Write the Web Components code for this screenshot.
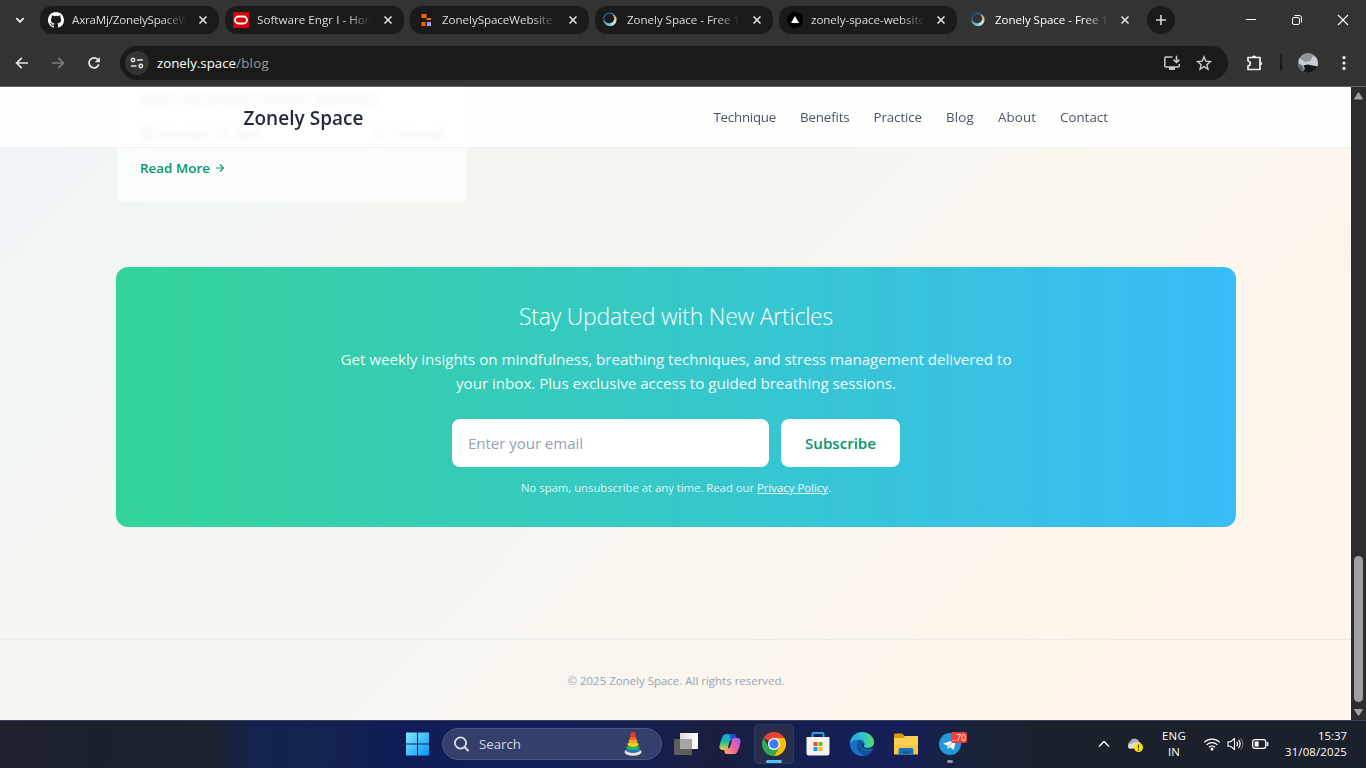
<!DOCTYPE html>
<html lang="en">
<head>
<meta charset="utf-8">
<title>Zonely Space - Free 1</title>
<style>
html,body{margin:0;height:100%;overflow:hidden}
body{font-family:"Open Sans","Noto Sans",sans-serif;background:#333}
</style>
</head>
<body>
<desktop-screen></desktop-screen>
<script>
function define(name, html, setup) {
  const t = document.createElement('template');
  t.innerHTML = html;
  customElements.define(name, class extends HTMLElement {
    connectedCallback() {
      if (this.shadowRoot) return;
      this.attachShadow({mode: 'open'}).append(t.content.cloneNode(true));
      if (setup) setup(this, this.shadowRoot);
    }
  });
}

/* Chrome tab */
define('browser-tab', `
<style>
:host{display:flex;box-sizing:border-box;width:var(--tw,179px);height:28px;border-radius:12px;background:#1a1a1a;align-items:center;padding:0 9px 0 8px;color:#dcdcdc;font-size:11.6px}
:host([active]){background:none;color:#fff}
.ico{width:16px;height:16px;display:flex;flex:none;margin-right:8px}
.t{flex:1;overflow:hidden;white-space:nowrap;height:18px;line-height:18px;-webkit-mask:linear-gradient(90deg,#000 78%,transparent 100%);mask:linear-gradient(90deg,#000 78%,transparent 100%)}
.x{flex:none;margin-left:9px;width:14px;height:14px}
</style>
<span class="ico"><slot name="icon"></slot></span><div class="t"><slot></slot></div>
<svg class="x" viewBox="0 0 14 14"><path d="M3.500 3.500l7 7M10.500 3.500l-7 7" stroke="#e3e3e3" stroke-width="1.600"/></svg>`);

define('moon-icon', `
<style>:host{display:block;width:16px;height:16px}</style>
<svg width="16" height="16" viewBox="0 0 16 16"><defs><linearGradient id="g" x1=".1" y1=".9" x2=".9" y2=".1"><stop offset="0" stop-color="#3ba3d6"/><stop offset=".35" stop-color="#a9e0f0"/><stop offset=".62" stop-color="#f6dcc0"/><stop offset=".85" stop-color="#d9b28c"/><stop offset="1" stop-color="#29506b"/></linearGradient></defs>
<circle cx="7" cy="7.500" r="6.200" fill="none" stroke="#235f82" stroke-width="1"/>
<path fill-rule="evenodd" d="M.4 7.500a6.600 6.600 0 1 0 13.200 0a6.600 6.600 0 1 0-13.200 0zM1 6.500a5.100 5.100 0 1 1 10.200 0a5.100 5.100 0 1 1-10.200 0z" fill="url(#g)"/><path d="M1 9.500A6.300 6.300 0 0 1 11 2.500" fill="none" stroke="#1f5170" stroke-width="1.300"/></svg>`);

define('tab-strip', `
<style>
:host{display:flex;height:40px;align-items:center;padding-left:12px;box-sizing:border-box}
.chev{width:16px;height:16px;margin-right:12px;flex:none}
.tabs{display:flex;gap:6px}
.plus{width:28px;height:28px;border-radius:50%;background:#1a1a1a;margin-left:6px;display:flex}
.win{margin-left:auto;display:flex}
.win svg{width:46px;height:40px}
browser-tab.n{--tw:178px}
svg{display:block}
</style>
<svg class="chev" viewBox="0 0 16 16"><path d="M4.300 6.200L8 9.900l3.700-3.700" fill="none" stroke="#e8e8e8" stroke-width="1.900"/></svg>
<div class="tabs">
<browser-tab style="--tw:179px"><svg slot="icon" viewBox="0 0 16 16" width="16" height="16"><path fill="#fff" d="M8 0C3.580 0 0 3.580 0 8c0 3.540 2.290 6.530 5.470 7.590.4.070.55-.17.55-.38v-1.490c-2.010.37-2.530-.49-2.690-.94-.09-.23-.48-.94-.82-1.130-.28-.15-.68-.52-.01-.53.63-.01 1.080.58 1.230.82.72 1.210 1.870.87 2.330.66.07-.52.28-.87.51-1.070-1.780-.2-3.640-.89-3.640-3.950 0-.87.31-1.590.82-2.150-.08-.2-.36-1.020.08-2.120 0 0 .67-.21 2.200.82a7.600 7.600 0 0 1 4 0c1.530-1.040 2.200-.82 2.200-.82.44 1.100.16 1.920.08 2.120.51.56.82 1.270.82 2.150 0 3.070-1.870 3.750-3.650 3.950.29.25.54.73.54 1.480v2.200c0 .21.15.46.55.38A8 8 0 0 0 16 8c0-4.420-3.580-8-8-8z"/></svg><fit-text w="117">AxraMj/ZonelySpaceW</fit-text></browser-tab>
<browser-tab><svg slot="icon" viewBox="0 0 16 16" width="16" height="16"><path fill="#d9000d" d="M0 0h16v16H0z"/><rect x="2" y="4.500" width="12" height="7" rx="3.500" fill="none" stroke="#fff" stroke-width="1.800"/></svg><fit-text w="115">Software Engr I - Hon</fit-text></browser-tab>
<browser-tab><svg slot="icon" viewBox="0 0 16 16" width="16" height="16"><path fill="#fa6400" d="M3.500 2h5v4h4.500v2H8.500V6h-5zM3.500 10h4v4h-4z"/><path fill="#a797ff" d="M9 10h4v4H9z"/></svg><fit-text w="117">ZonelySpaceWebsite -</fit-text></browser-tab>
<browser-tab class="n"><moon-icon slot="icon"></moon-icon><fit-text w="113">Zonely Space - Free 1</fit-text></browser-tab>
<browser-tab class="n"><svg slot="icon" viewBox="0 0 16 16" width="16" height="16"><circle cx="8" cy="8" r="8"/><path fill="#fff" d="M8 4l4 7H4z"/></svg><fit-text w="114">zonely-space-website</fit-text></browser-tab>
<browser-tab class="n" active><moon-icon slot="icon"></moon-icon><fit-text w="113">Zonely Space - Free 1</fit-text></browser-tab>
</div>
<div class="plus"><svg width="28" height="28"><path d="M14 9v10M9 14h10" stroke="#d5d5d5" stroke-width="1.600"/></svg></div>
<div class="win">
<svg><path d="M18 19.500h10" stroke="#fff"/></svg>
<svg><g fill="none" stroke="#fff"><rect x="18.500" y="17.500" width="7" height="7" rx="1.500"/><path d="M20.500 15.500h5a2 2 0 0 1 2 2v5"/></g></svg>
<svg><path d="M18 15l10 10M28 15l-10 10" stroke="#fff" stroke-width="1.100"/></svg>
</div>`);

define('tool-bar', `
<style>
:host{display:flex;height:46px;align-items:center;box-sizing:border-box;padding:0 12px 0 12px}
svg{display:block;flex:none}
.nav{display:flex;gap:16px;margin:0 16px 0 0}
.omni{display:flex;align-items:center;width:1108px;height:34px;border-radius:17px;background:#1a1a1a;box-sizing:border-box;padding:0 14px 0 5px;flex:none}
.site{width:24px;height:24px;border-radius:50%;background:#333;margin-right:8px}
.url{color:#fff;font-size:13.300px;display:flex}
.url .p{color:#9a9a9a}
.r{margin-left:auto;display:flex;gap:12px}
.ext{margin-left:16px}
.sep{width:2px;height:16px;background:#1a1a1a;margin:0 16px 0 16px}
.av{margin-right:16px}
</style>
<div class="nav">
<svg width="20" height="20"><path d="M16 10H5M9.800 4.800L4.600 10l5.200 5.200" fill="none" stroke="#e6e6e6" stroke-width="1.700"/></svg>
<svg width="20" height="20"><path d="M4 10h11M10.200 4.800l5.200 5.200-5.200 5.200" fill="none" stroke="#7d7d7d" stroke-width="1.700"/></svg>
<svg width="20" height="20"><path d="M14.800 11.300A5 5 0 1 1 13.600 6.400L15 7.800" fill="none" stroke="#e6e6e6" stroke-width="1.700"/><path d="M15.900 4v5.200h-5.200z" fill="#e6e6e6"/></svg>
</div>
<div class="omni">
<svg class="site" viewBox="0 0 24 24"><g fill="none" stroke="#e6e6e6" stroke-width="1.500"><circle cx="8" cy="9" r="1.700"/><path d="M12 9h5.800M6 15h5.500"/><circle cx="15.800" cy="15" r="1.700"/></g></svg>
<div class="url"><fit-text w="79">zonely.space</fit-text><fit-text w="33" class="p">/blog</fit-text></div>
<div class="r">
<svg width="20" height="20"><path d="M10.500 4H3.800Q2.800 4 2.800 5v8q0 1 1 1h12.400q1 0 1-1v-2" fill="none" stroke="#c7c7c7" stroke-width="1.500"/><path d="M7 14h6v3H7z" fill="#c7c7c7"/><path d="M14.500 2.800v6.500M11.600 6.600l2.900 2.900 2.900-2.900" fill="none" stroke="#c7c7c7" stroke-width="1.500"/></svg>
<svg width="20" height="20"><path d="M10 3.800l1.800 4.300 4.700.4-3.600 3.100 1.100 4.600-4-2.500-4 2.500 1.100-4.600-3.600-3.100 4.700-.4z" fill="none" stroke="#c7c7c7" stroke-width="1.400"/></svg>
</div></div>
<svg class="ext" width="20" height="20"><path d="M4 4.500h12v12H4v-3.500q2.300-.5 2.300-2.500T4 8z" fill="none" stroke="#f0f0f0" stroke-width="1.700" stroke-linejoin="round"/><path d="M7.900 4.500a2.100 2.100 0 0 1 4.200 0zM16 8.400a2.100 2.100 0 0 1 0 4.200z" fill="#f0f0f0"/></svg>
<div class="sep"></div>
<svg class="av" width="20" height="20"><defs><clipPath id="c"><circle cx="10" cy="10" r="10"/></clipPath></defs><g clip-path="url(#c)"><path fill="#8d959d" d="M0 0h20v20H0z"/><path fill="#c9ccd0" d="M1 5l6 4 5-1 3-5 5 2v8l-8 2H0z"/><path fill="#666b70" d="M0 10l5 3 1 7H0z"/><path fill="#15181b" d="M5.500 12.500l4-1 10 2-1 2.500-3 4H4l3-4z"/></g></svg>
<svg width="20" height="20"><g fill="#f0f0f0"><circle cx="10" cy="4.600" r="1.600"/><circle cx="10" cy="10" r="1.600"/><circle cx="10" cy="15.400" r="1.600"/></g></svg>`);

/* Web page */
define('site-header', `
<style>
:host{display:flex;position:absolute;inset:0 0 auto 0;height:61px;box-sizing:border-box;border-bottom:1px solid #eff2f1;background:rgba(255,255,255,.87);backdrop-filter:blur(3px);padding:0 243px 0 243.500px;align-items:center;justify-content:space-between}
.logo{font-size:19px;line-height:22px;font-weight:600;color:#1e293b;margin-top:2px}
nav{display:flex;gap:24px;font-size:13.300px;color:#475569}
</style>
<fit-text w="120" class="logo">Zonely Space</fit-text>
<nav><fit-text w="62.500">Technique</fit-text><fit-text w="49.500">Benefits</fit-text><fit-text w="48.500">Practice</fit-text><fit-text w="28">Blog</fit-text><fit-text w="38">About</fit-text><fit-text w="48">Contact</fit-text></nav>`);

define('article-card', `
<style>
:host{display:block;box-sizing:border-box;width:350px;height:115px;margin-left:117px;padding:0 23px;background:rgba(255,255,255,.7);border-radius:0 0 8px 8px;font-size:13.300px;color:#475569;overflow:hidden}
.l{height:24px;line-height:22px}
.m{display:flex;justify-content:space-between;height:20px;line-height:20px;margin-top:13px;font-size:11.500px}
.m span{display:flex;align-items:center;gap:4px}
.more{display:flex;align-items:center;gap:5px;height:20px;line-height:20px;margin-top:14px;color:#059669;font-weight:600}
</style>
<div class="l"><fit-text w="241">peace and present moment awareness.</fit-text></div>
<div class="m"><span><svg width="14" height="14"><path d="M2 3h10v9H2zM2 6h10" fill="none" stroke="#475569"/></svg><fit-text w="102">December 10, 2024</fit-text></span><span><svg width="14" height="14"><circle cx="7" cy="7" r="5.500" fill="none" stroke="#475569"/><path d="M7 4v3.500h2" fill="none" stroke="#475569"/></svg><fit-text w="55">7 min read</fit-text></span></div>
<div class="more"><fit-text w="70">Read More</fit-text><svg width="11" height="12"><path d="M1 6h7M5 2.500L8.500 6 5 9.500" fill="none" stroke="#10a070" stroke-width="1.100"/></svg></div>`);

define('newsletter-signup', `
<style>
:host{display:flex;flex-direction:column;align-items:center;box-sizing:border-box;width:1120px;height:260px;margin:65px 0 0 116px;border-radius:12px;background:linear-gradient(90deg,#34d399,#38bdf8);padding-top:32px;color:#fff}
.h{font-size:23px;font-weight:300;line-height:32px;height:32px;margin-top:1px}
.p{font-size:15.200px;line-height:24px;text-align:center;margin-top:15px;color:rgba(255,255,255,.94);display:flex;flex-direction:column;align-items:center}
form{display:flex;gap:12px;margin-top:24px}
.in,.b{height:48px;line-height:48px;border-radius:8px;background:#fff;font-size:15.200px;box-sizing:border-box}
.in{width:317px;padding-left:16px;color:#94a3b8}
.b{width:119px;padding-left:24px;color:#059669;font-weight:600}
.s{display:flex;font-size:11.400px;line-height:16px;margin-top:13px;color:rgba(255,255,255,.85)}
.u{text-decoration:underline;color:#f0fbff}
</style>
<fit-text w="314" class="h">Stay Updated with New Articles</fit-text>
<div class="p"><fit-text w="671">Get weekly insights on mindfulness, breathing techniques, and stress management delivered to</fit-text><fit-text w="440">your inbox. Plus exclusive access to guided breathing sessions.</fit-text></div>
<form><div class="in"><fit-text w="115">Enter your email</fit-text></div><div class="b"><fit-text w="71">Subscribe</fit-text></div></form>
<div class="s"><fit-text w="236">No spam, unsubscribe at any time. Read our&nbsp;</fit-text><fit-text w="71" class="u">Privacy Policy</fit-text><span>.</span></div>`);

define('site-footer', `
<style>:host{display:flex;justify-content:center;box-sizing:border-box;height:81px;margin-top:112px;border-top:1px solid rgba(226,232,240,.6);padding:33px 0 0 1px;font-size:11.400px;line-height:16px;color:#94a3b8}</style>
<fit-text w="217">© 2025 Zonely Space. All rights reserved.</fit-text>`);

define('scroll-bar', `
<style>:host{display:flex;flex-direction:column;align-items:center;width:15px;background:#2c2c2c;flex:none}
.th{width:9px;height:146px;border-radius:5px;background:#9f9f9f;margin-top:auto}svg{display:block;flex:none}</style>
<svg width="15" height="18"><path d="M7.500 5.500l4 6.500h-8z" fill="#9f9f9f" stroke="#9f9f9f" stroke-linejoin="round"/></svg><div class="th"></div><svg width="15" height="18"><path d="M3.500 7.500h8l-4 6z" fill="#9f9f9f" stroke="#9f9f9f" stroke-linejoin="round"/></svg>`);

define('web-page', `
<style>
:host{display:flex;height:634px;box-sizing:border-box;border-top:1px solid #666}
main{position:relative;width:1351px;overflow:hidden;background:linear-gradient(135deg,#eef4f8 0%,#f4f6f1 28%,#f7f6f0 50%,#fbf6ee 66%,#fff5eb 84%)}
</style>
<main><article-card></article-card><newsletter-signup></newsletter-signup><site-footer></site-footer><site-header></site-header></main>
<scroll-bar></scroll-bar>`);

/* Windows taskbar */
define('task-bar', `
<style>
:host{display:flex;height:48px;box-sizing:border-box;border-top:1px solid #3b415c;background:linear-gradient(90deg,#1c212b 0,#1b222d 205px,#13234d 255px,#14224f 330px,#101c57 400px,#132057 560px,#16204f 650px,#1a1e3e 715px,#14204f 790px,#131f57 900px,#1a2236 985px,#1b212b 1040px,#1b212c 100%);align-items:center;padding:0 19px 2px 405px;color:#fff}
svg{display:block;flex:none}
.search{display:flex;align-items:center;box-sizing:border-box;width:220px;height:32px;border-radius:16px;background:#343f6c;border:1px solid #4d5780;margin:0 2px 0 12px;padding:0 16px 0 10px;font-size:13.300px;color:#d2d6e3;flex:none}
.search fit-text{margin-left:9px}
.search svg:last-child{margin-left:auto}
.app{width:40px;height:40px;margin:0 2px;display:flex;flex-direction:column;align-items:center;justify-content:center;border-radius:5px;box-sizing:border-box;position:relative;flex:none}
.app.on{background:#282d4b;border:1px solid #343955}
.bar{position:absolute;bottom:0;width:16px;height:3px;border-radius:2px;background:#4cc2ff}
.bar.s{width:6px;bottom:1px;background:#9397a5}
.badge{position:absolute;left:21px;top:8px;width:16px;height:11px;border-radius:2px;background:#f33c35;font-size:8.500px;line-height:11px;text-align:center}
.tray{margin-left:auto;display:flex;align-items:center;font-size:11.400px;line-height:16px}
.tray>div{display:flex;flex-direction:column;align-items:center}
.tray .clk{align-items:flex-end}
</style>
<svg width="25" height="24"><defs><linearGradient id="w" x1="0" y1="0" x2="1" y2="1" ><stop offset="0" stop-color="#7deaff"/><stop offset="1" stop-color="#0a94f6"/></linearGradient></defs><path fill="url(#w)" d="M1 .5h11v11H1zM13 .5h11v11H13zM1 12.500h11v11H1zM13 12.500h11v11H13z"/></svg>
<div class="search"><svg width="17" height="18"><circle cx="7.500" cy="8" r="5.600" fill="none" stroke="#dfe3ee" stroke-width="1.700"/><path d="M11.500 12l4 4" stroke="#dfe3ee" stroke-width="1.900"/></svg><fit-text w="42">Search</fit-text>
<svg width="26" height="26" style="margin-right:-1px"><ellipse cx="13" cy="21" rx="8.500" ry="3.800" fill="#eee3d2"/><ellipse cx="13" cy="19" rx="7" ry="3" fill="#1976d2"/><ellipse cx="13" cy="16.500" rx="6.500" ry="2.700" fill="#2fb34a"/><ellipse cx="13" cy="13.300" rx="5.500" ry="2.400" fill="#e7d329"/><ellipse cx="13" cy="10" rx="4.300" ry="2.200" fill="#f9a21a"/><ellipse cx="13" cy="7" rx="3.200" ry="2" fill="#f26522"/><circle cx="13" cy="3.800" r="2.700" fill="#e63a2e"/></svg></div>
<div class="app"><svg width="26" height="24"><defs><linearGradient id="v"><stop stop-color="#ddd"/><stop offset="1" stop-color="#fff"/></linearGradient></defs><path fill="url(#v)" d="M7 1h18v16H7z"/><path fill="#5d5d5d" d="M1 7h18v16H1z"/><path fill="#a6a6a6" d="M7 7h12v10H7z"/></svg></div>
<div class="app"><svg width="24" height="24" viewBox="0 0 24 24"><defs><linearGradient id="a" x1="0" y1="0" x2="0" y2="1"><stop stop-color="#15a0e8"/><stop offset=".5" stop-color="#24b99b"/><stop offset="1" stop-color="#f0d33b"/></linearGradient><linearGradient id="b" x1="1" y1="0" x2="0" y2="1"><stop stop-color="#a65bf0"/><stop offset=".5" stop-color="#ee5f9d"/><stop offset="1" stop-color="#ffb163"/></linearGradient></defs><path fill="url(#a)" d="M8 2h7q2 0 2.500 2l.8 3h-3q-2 0-2.700 2.200L10.500 16q-.8 2-3 2H5q-4 0-3.500-4 .8-5 3-9.500Q5.700 2 8 2z"/><path fill="#1a4fd0" d="M11 2h5q1.500 0 2 2l1 3.200h-3q-2 0-2.700 2z"/><path fill="url(#b)" d="M16 22H9q-2 0-2.500-2l-.8-3h3q2 0 2.700-2.200L13.500 8q.8-2 3-2H19q4 0 3.500 4-.8 5-3 9.500Q18.300 22 16 22z"/><path fill="#182148" d="M12 8.500h2l-2.300 7.200H9.800z"/></svg></div>
<div class="app on"><svg width="24" height="24" viewBox="0 0 24 24"><path fill="#ea4335" d="M12 12L1.600 6A12 12 0 0 1 22.400 6z"/><path fill="#fbbc04" d="M12 12l0-6h10.400A12 12 0 0 1 12 24l5.200-9z"/><path fill="#34a853" d="M12 12l5.200 3L12 24A12 12 0 0 1 1.600 6l5.200 9z"/><circle cx="12" cy="12" r="6" fill="#fff"/><circle cx="12" cy="12" r="4.700" fill="#3b7ded"/></svg><div class="bar"></div></div>
<div class="app"><svg width="24" height="24" viewBox="0 0 24 24"><path d="M6.500 6V2q0-1 1-1h9q1 0 1 1v4" fill="none" stroke="#24a7e0" stroke-width="2"/><path fill="#f3f3f3" d="M.5 5h23v16q0 2.500-2.500 2.500H3q-2.500 0-2.500-2.500z"/><path fill="#f25022" d="M7.500 10h4v4h-4z"/><path fill="#7fba00" d="M12.500 10h4v4h-4z"/><path fill="#00a4ef" d="M7.500 15h4v4h-4z"/><path fill="#ffb900" d="M12.500 15h4v4h-4z"/></svg></div>
<div class="app"><svg width="24" height="24" viewBox="0 0 24 24"><defs><linearGradient id="e"><stop stop-color="#20a5e8"/><stop offset=".6" stop-color="#35c7c5"/><stop offset="1" stop-color="#5bdc57"/></linearGradient></defs><circle cx="12" cy="12" r="12" fill="#176fc4"/><path fill="url(#e)" d="M0 12C0 5 5.500 0 12 0s12 4.500 12 10c0 4-3 6-6.500 6-2.500 0-4-1-3.500-2 2-3-.5-6.500-4.500-6.500C5 7.500 1 9 0 12z"/><path fill="#10509d" d="M9 9c-4 4-2 12 6 14.500 3-.5 6-2.500 7.500-5.500-3 1.700-8 1.500-10.500-1.500C10 14.500 9.800 12 12 9.500c-.6-.8-2-1-3-.5z"/><path fill="#182148" d="M12 10c-1.500 2.500-.5 5 1.500 6.200 3 1.700 6.500 1.600 9.300.3l1.200 1-2 3 2 1 0-9c-1.500 2.500-4 3.500-6.500 3.500s-4-1-3.500-2c.8-1.300 0-3-2-3z" opacity=".75"/></svg></div>
<div class="app"><svg width="24" height="24" viewBox="0 0 24 24"><path fill="#d99a0b" d="M0 2.500q0-1 1-1h7l3 3v3H0z"/><path fill="#ffd052" d="M0 6h9l2-2h13v18H0z"/><path fill="#fbc740" d="M0 13h24v9.500H0z"/><path fill="#1672bd" d="M4.500 22.500v-4.500q0-2 2-2h11q2 0 2 2v4.500z"/><path fill="#0d5591" d="M8 19.500h8v1.500H8z"/></svg></div>
<div class="app"><svg width="22" height="22" viewBox="0 0 22 22"><circle cx="11" cy="11" r="11" fill="#2497d6"/><path fill="#fff" d="M4 10.800L17 6l-2.200 11-4-3-2 2-.3-3.500z"/><path fill="#bcdcef" d="M8.500 12.500L15 8l-4.200 6-2 2z"/></svg><div class="badge">..70</div><div class="bar s"></div></div>
<div class="tray">
<svg width="14" height="14" style="margin-right:15px"><path d="M2 9.500L7 4.500l5 5" fill="none" stroke="#fff" stroke-width="1.300"/></svg>
<svg width="18" height="18" style="margin-right:18px"><path fill="#a9adb3" d="M4 13.500a4 4 0 0 1 0-7A5 5 0 0 1 13 6l-6 7.500z"/><path fill="#d9dbde" d="M3 13.500q-2-2 0-4l9-3q3 .5 3 4v3z"/><circle cx="12.500" cy="12.500" r="4.500" fill="#ffe000"/><path d="M12.500 9.700v3.600M12.500 14.200v1.200" stroke="#222" stroke-width="1.100"/></svg>
<div style="margin-right:17px"><fit-text w="24">ENG</fit-text><fit-text w="12">IN</fit-text></div>
<svg width="18" height="16" style="margin-right:6px"><g fill="none" stroke="#fff" stroke-width="1.200"><path d="M1.200 6.300a11 11 0 0 1 15.600 0"/><path d="M3.600 8.900a7.600 7.600 0 0 1 10.800 0"/><path d="M6 11.300a4.300 4.300 0 0 1 6 0"/></g><circle cx="9" cy="13" r="1.500" fill="#fff"/></svg>
<svg width="18" height="16" style="margin-right:7px"><g fill="none" stroke="#fff" stroke-width="1.100"><path d="M1 5.800h2.500L7.500 2.500v11L3.500 10.200H1z" stroke-linejoin="round"/><path d="M9.700 5.800a3.300 3.300 0 0 1 0 4.400M11.500 4a5.800 5.800 0 0 1 0 8"/><path d="M13.500 2.300a8 8 0 0 1 0 11.400" stroke="#6c7078"/></g></svg>
<svg width="17" height="16" style="margin-right:16px"><rect x=".7" y="3.700" width="13" height="8.600" rx="2" fill="none" stroke="#fff" stroke-width="1.200"/><rect x="2.600" y="5.500" width="4" height="5" fill="#fff"/><path d="M15.500 6v4" stroke="#fff" stroke-width="1.600"/></svg>
<div class="clk"><fit-text w="29">15:37</fit-text><fit-text w="62">31/08/2025</fit-text></div>
</div>`);

define('desktop-screen', `
<style>:host{display:flex;flex-direction:column;width:1366px;height:768px;background:#333}</style>
<tab-strip></tab-strip><tool-bar></tool-bar><web-page></web-page><task-bar></task-bar>`);

/* One line of text whose tracking is tuned to a given width */
define('fit-text', `<style>:host{display:inline-block;white-space:nowrap;flex:none}</style><slot></slot>`, el => {
  const w = parseFloat(el.getAttribute('w'));
  const r = document.createRange();
  r.selectNodeContents(el);
  const natural = r.getBoundingClientRect().width;
  el.style.letterSpacing = ((w - natural) / el.textContent.length).toFixed(4) + 'px';
});
</script>
</body>
</html>
